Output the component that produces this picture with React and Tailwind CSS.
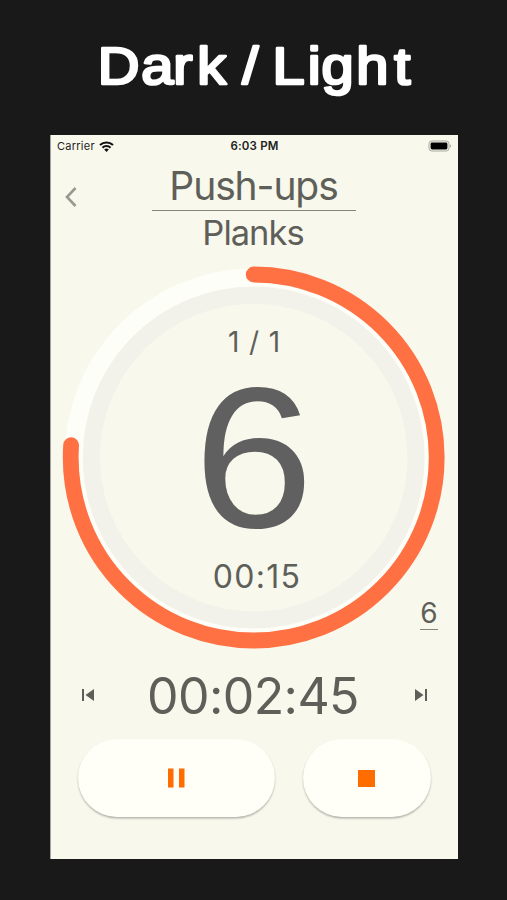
import { useState } from 'react'

const RADIUS = 183
const CIRCUMFERENCE = 2 * Math.PI * RADIUS

function StatusBar() {
  return (
    <div className="flex h-[22px] items-center justify-between pl-[6px] pr-[6px] text-[11px] text-[#222]">
      <div className="flex w-[80px] items-center gap-[4px]">
        <span className="tracking-[0.25px]">Carrier</span>
        <svg width="15" height="11" viewBox="0 0 15 11" fill="none" stroke="#111" strokeWidth="2.1">
          <path d="M1 4.1a9.3 9.3 0 0 1 13 0" />
          <path d="M3.5 6.7a5.7 5.7 0 0 1 8 0" />
          <path d="M7.5 10.9 5.2 8.5a3.3 3.3 0 0 1 4.6 0Z" fill="#111" stroke="none" />
        </svg>
      </div>
      <span className="pt-px text-[11.500px] font-semibold tracking-[0.2px]">6:03 PM</span>
      <div className="flex w-[80px] justify-end">
        <svg width="24" height="12" viewBox="0 0 24 12">
          <rect x="1" y="1" width="20" height="10" rx="2.8" fill="none" stroke="#a9a99f" />
          <rect x="2.6" y="2.5" width="16.8" height="7" rx="1.4" fill="#000" />
          <path d="M22 4.2c1.4.6 1.4 3 0 3.6Z" fill="#a9a99f" />
        </svg>
      </div>
    </div>
  )
}

function ProgressRing({ progress }) {
  return (
    <svg width="384" height="384" viewBox="0 0 384 384" fill="none" className="col-start-1 row-start-1">
      <circle cx="191.7" cy="191.5" r="162.5" stroke="#f2f2ea" strokeWidth="17.5" />
      <circle cx="191.7" cy="191.5" r="180" stroke="#fefef8" strokeWidth="18" />
      <circle
        cx="191.7"
        cy="191.5"
        r={RADIUS}
        stroke="#ff7043"
        strokeWidth="15.8"
        strokeLinecap="round"
        strokeDasharray={`${CIRCUMFERENCE * progress} ${CIRCUMFERENCE}`}
        transform="rotate(-90 191.7 191.5)"
      />
    </svg>
  )
}

export default function App() {
  const [paused, setPaused] = useState(false)

  return (
    <div className="h-[900px] w-[507px] overflow-hidden bg-[#191919] font-['Inter',sans-serif]">
      <h1 className="flex h-[135px] justify-center">
        <svg
          width="507"
          height="135"
          viewBox="0 0 507 135"
          fill="#fff"
          stroke="#fff"
          strokeWidth="2.7"
          strokeLinejoin="round"
          className="font-['Liberation_Sans',sans-serif] text-[52.500px] font-normal"
        >
          <g transform="scale(1.1 1)">
            <text y="83.8" x="88.8 128.4 157.600 179.400">Dark</text>
            <text y="83.8" x="220.2">/</text>
            <text y="83.8" x="247.8 279.800 292.2 323.9 358.4">Light</text>
          </g>
        </svg>
      </h1>

      <main className="ml-[50px] h-[724px] w-[408px] border-l border-[#a5a5a0] bg-[#f8f8ec] text-[#5f5f5a]">
        <StatusBar />

        <header className="mt-[5px] flex h-[92px]">
          <button className="mt-[24px] ml-[13px] h-[22px] w-[14px]" aria-label="Back">
            <svg width="14" height="22" viewBox="0 0 14 22" fill="none" stroke="#999992" strokeWidth="2.6">
              <path d="M11.5 2 3 11l8.500 9" />
            </svg>
          </button>
          <div className="ml-[74px] w-[204px] text-center">
            <div className="h-[49px] border-b border-[#85857f] pr-px text-[39px] leading-[48px] tracking-[-1.1px]">Push-ups</div>
            <div className="pr-[2px] text-[34.500px] leading-[43px] tracking-[-1px]">Planks</div>
          </div>
        </header>

        <section className="relative mt-[12px] ml-[11px] grid h-[384px] w-[384px]">
          <ProgressRing progress={0.7604} />
          <div className="z-10 col-start-1 row-start-1 flex flex-col items-center pt-14">
            <div className="h-10 pl-px text-[28px] leading-10 tracking-[0.9px]">1 / 1</div>
            <div className="h-[193px] scale-x-[1.08] font-['Liberation_Sans',sans-serif] text-[200px] leading-[191px] text-[#606060]">
              6
            </div>
            <div className="h-[42px] pl-[6px] text-[32px] leading-[43px] tracking-[1.300px]">00:15</div>
          </div>
          <div className="absolute top-[331px] left-[358px] h-[33px] w-[18px] border-b border-[#85857f] text-center text-[28px] leading-[32px]">
            6
          </div>
        </section>

        <section className="flex h-[89px] items-center justify-between pr-[30px] pl-[30px]">
          <button aria-label="Previous" className="pt-px">
            <svg width="14" height="14" viewBox="0 0 14 14" fill="#5f5f5a">
              <path d="M1 1h2v12H1zM13 1v12L4.500 7z" />
            </svg>
          </button>
          <div className="pt-[3px] pr-[3px] text-[50px] tracking-[-0.6px]">00:02:45</div>
          <button aria-label="Next" className="pt-px">
            <svg width="14" height="14" viewBox="0 0 14 14" fill="#5f5f5a">
              <path d="M11 1h2v12h-2zM1 1v12l8.500-6z" />
            </svg>
          </button>
        </section>

        <section className="flex gap-[28px] pl-[27px]">
          <button
            onClick={() => setPaused(!paused)}
            className="flex h-[78px] w-[197px] items-center justify-center rounded-full bg-[#fffff8] pr-px shadow-[0_1.500px_2px_rgba(0,0,0,0.28)]"
          >
            <svg width="18" height="20" viewBox="0 0 18 20" fill="#ff6d00">
              {paused ? <path d="M2 0v20l15-10z" /> : <path d="M1 .5h5.500v19H1zM12 .5h5.500v19h-5.500z" />}
            </svg>
          </button>
          <button className="flex h-[78px] w-[128px] items-center justify-center rounded-full bg-[#fffff8] pr-[2px] shadow-[0_1.500px_2px_rgba(0,0,0,0.28)]">
            <span className="size-[17px] bg-[#ff6d00]" />
          </button>
        </section>
      </main>
    </div>
  )
}
